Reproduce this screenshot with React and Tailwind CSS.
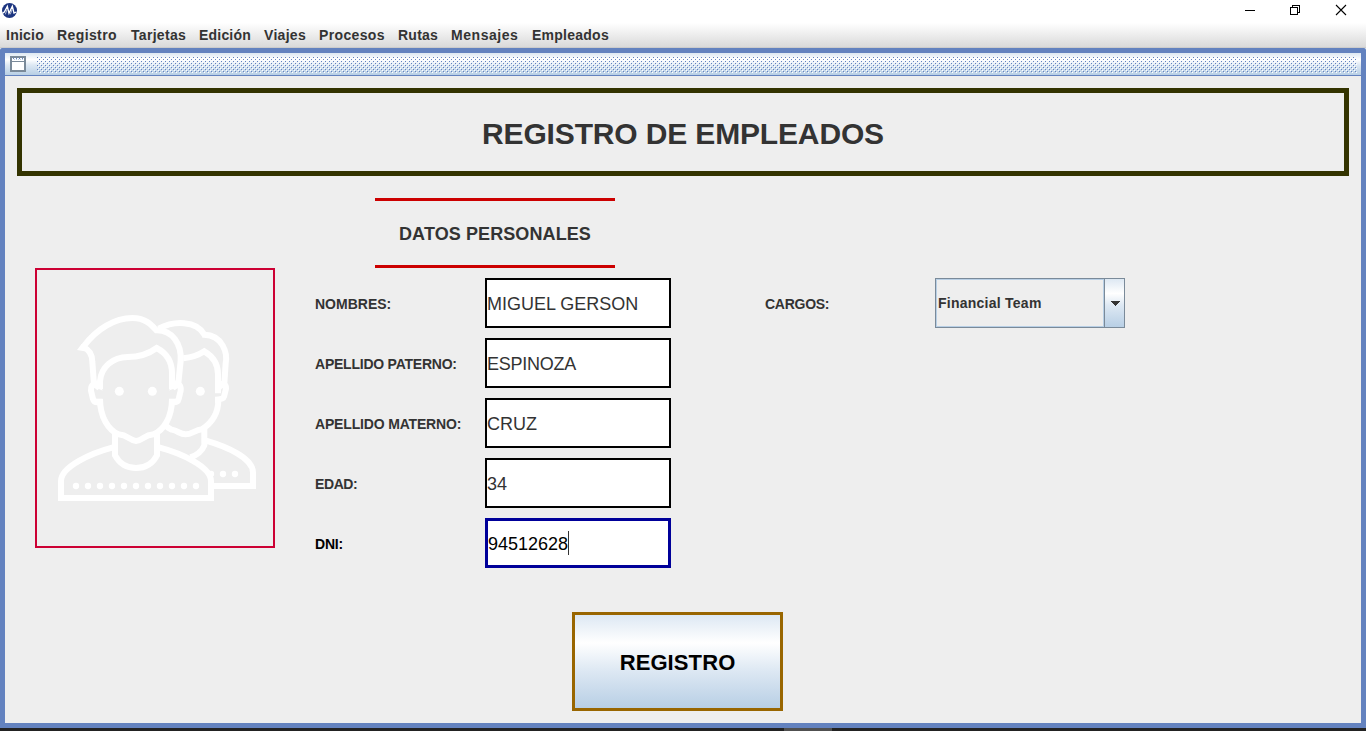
const menus = [
  { label: 'Inicio', cls: 'w-[51px] tracking-[0.25px]' },
  { label: 'Registro', cls: 'w-[74px] tracking-[0.4px]' },
  { label: 'Tarjetas', cls: 'w-[68px] tracking-[0.3px]' },
  { label: 'Edición', cls: 'w-[65px] tracking-[0.2px]' },
  { label: 'Viajes', cls: 'w-[55px] tracking-[0.3px]' },
  { label: 'Procesos', cls: 'w-[79px] tracking-[0.35px]' },
  { label: 'Rutas', cls: 'w-[53px] tracking-[0.25px]' },
  { label: 'Mensajes', cls: 'w-[81px] tracking-[0.55px]' },
  { label: 'Empleados', cls: 'w-[90px] tracking-[0.25px]' },
];

const fields = [
  { label: 'NOMBRES:', value: 'MIGUEL GERSON', labelCls: 'tracking-normal', valueCls: 'tracking-normal' },
  { label: 'APELLIDO PATERNO:', value: 'ESPINOZA', labelCls: 'tracking-[-0.23px]', valueCls: 'tracking-[-0.25px]' },
  { label: 'APELLIDO MATERNO:', value: 'CRUZ', labelCls: 'tracking-[-0.17px]', valueCls: 'tracking-normal' },
  { label: 'EDAD:', value: '34', labelCls: 'tracking-[-0.4px]', valueCls: 'tracking-normal' },
  { label: 'DNI:', value: '94512628', labelCls: 'tracking-[-0.2px]', valueCls: 'tracking-normal', focused: true },
];

function Logo() {
  return (
    <svg className="mt-[3px] ml-[2px] h-[15px] w-[15px]" viewBox="0 0 45 45">
      <circle cx="22.5" cy="22.5" r="22.5" fill="#1c3580" />
      <path d="M1 31L7 27L16 10L21 31L31 10L36 30L43 27" fill="none" stroke="#fff" strokeWidth="4" />
      <path d="M10 34L15 20M25 34L30 20" fill="none" stroke="#fff" strokeWidth="2" />
    </svg>
  );
}

function WindowControls() {
  return (
    <svg className="h-5 w-[126px]" viewBox="0 0 126 20" fill="none" stroke="#000" shapeRendering="crispEdges">
      <path d="M5 10.5H15" />
      <path d="M50.5 7.5H57.5V14.5H50.5ZM52.5 7.5V5.5H59.5V12.5H57.5" />
      <path d="M96 5L106 15M106 5L96 15" shapeRendering="auto" strokeWidth="1.1" />
    </svg>
  );
}

function FrameBar() {
  return (
    <div className="flex h-[23px] border-b border-[#6382bf] bg-[linear-gradient(to_bottom,#dde8f3_0%,#ffffff_30%,#dde8f3_55%,#b8cfe5_100%)]">
      <svg className="mt-[3px] ml-[5px] h-4 w-4" viewBox="0 0 16 16" shapeRendering="crispEdges">
        <rect x="1" y="1" width="14" height="14" fill="#fff" stroke="#7a8a99" strokeWidth="2" />
        <rect x="2" y="5" width="12" height="1" fill="#7a8a99" />
        <path d="M3 2.5H13" stroke="#6382bf" strokeDasharray="1 2" />
        <path d="M4 3.5H13" stroke="#b8cfe5" strokeDasharray="1 1" />
      </svg>
      <svg className="mt-1 ml-[11px] h-4 w-[1320px]" shapeRendering="crispEdges">
        <defs>
          <pattern id="bumps" width="4" height="4" patternUnits="userSpaceOnUse">
            <path d="M0 0h1v1h-1zM2 2h1v1h-1z" fill="#6382bf" />
            <path d="M1 1h1v1h-1zM3 3h1v1h-1z" fill="#fff" />
          </pattern>
        </defs>
        <rect width="1320" height="16" fill="url(#bumps)" />
      </svg>
    </div>
  );
}

function People() {
  return (
    <svg className="h-[210px] w-[250px] shrink-0" viewBox="0 0 750 630" fill="none" stroke="#fff" strokeWidth="18">
      <path d="M386 86C430 62 500 60 523 104C578 105 593 160 587 190L583 250" />
      <path d="M460 175Q495 172 523 154Q564 178 564 223V280" />
      <path d="M572 258Q589 247 588 266L582 290Q580 299 555 299M565 300C565 350 536 375 516 388C494 390 484 404 466 403C449 402 445 393 425 389Q413 384 407 376" />
      <path d="M523 386V436Q512 462 481 472M528 422C590 440 669 474 669 518V558H545" />
      <path d="M160 140C200 86 255 54 307 54C345 54 363 73 379 91C427 90 455 132 452 182L445 250" />
      <path d="M160 142C177 149 187 164 187 186L192 254" />
      <path d="M141 150L155 131L167 143L164 154Z" fill="#fff" stroke="none" />
      <path d="M210 268V244C213 201 249 171 293 171C333 171 361 158 380 144Q426 168 426 220V268" />
      <path d="M208 264Q182 241 183 272L189 297Q192 309 210 306M428 264Q454 241 452 272L446 297Q444 309 426 306" />
      <path d="M196 297H218M417 297H440" strokeWidth="2" />
      <path d="M210 297C210 351 235 390 265 403C295 405 299 422 318 423C337 422 342 405 371 403C402 390 426 351 426 297" />
      <path d="M255 395V466Q276 504 318 504Q361 504 381 466V395" />
      <path d="M249 442C185 459 93 499 93 543V594H543V543C543 499 451 459 387 442" />
      <path d="M201 240L218 272L184 254ZM435 240L417 272L452 254Z" fill="#fff" stroke="none" />
      <path d="M556 240L590 246L571 272L556 270Z" fill="#fff" stroke="none" />
      <g fill="#fff" stroke="none">
        <circle cx="268" cy="274" r="13.5" />
        <circle cx="367" cy="274" r="13.5" />
        <circle cx="511" cy="274" r="13.5" />
        {[138, 174, 210, 246, 282, 318, 354, 390, 426, 462, 498].map((x) => (
          <circle key={x} cx={x} cy="558" r="9.5" />
        ))}
        {[543, 579, 615].map((x) => (
          <circle key={x} cx={x} cy="522" r="9.5" />
        ))}
      </g>
    </svg>
  );
}

function Field({ label, value, labelCls, valueCls, focused }) {
  return (
    <div className="flex h-[50px] items-center">
      <label className={`w-[170px] pt-px text-sm font-bold whitespace-nowrap ${labelCls} ${focused ? 'text-black' : 'text-[#333333]'}`}>{label}</label>
      <div
        className={`flex h-[50px] w-[186px] items-center bg-white text-[18px] whitespace-nowrap ${
          focused ? 'border-[3px] border-[#000099] text-black' : 'border-2 border-black text-[#333333]'
        }`}
      >
        <span className={`pt-0.5 ${valueCls}`}>{value}</span>
        {focused && <span className="h-6 w-px bg-[#333333]" />}
      </div>
    </div>
  );
}

export default function App() {
  return (
    <div className="flex h-[731px] w-[1366px] flex-col overflow-hidden bg-white font-['Liberation_Sans',Arial,sans-serif] text-[#333333]">
      <header className="flex h-[23px] justify-between">
        <Logo />
        <WindowControls />
      </header>
      <nav className="flex h-[25px] items-center border-b border-[#cccccc] bg-linear-to-b from-white to-[#dadada] pl-1.5 text-sm font-bold">
        {menus.map((m) => (
          <span key={m.label} className={`whitespace-nowrap ${m.cls}`}>{m.label}</span>
        ))}
      </nav>
      <main className="flex h-[680px] flex-col rounded-t-[2px] border-[5px] border-[#6382bf] bg-[#eeeeee]">
        <FrameBar />
        <h1 className="mx-3 mt-3 flex h-[88px] items-center justify-center border-[5px] border-[#333300] pt-0.5 text-[30px] font-bold tracking-[-0.15px]">
          REGISTRO DE EMPLEADOS
        </h1>
        <div className="flex h-[370px] pl-[30px]">
          <section className="mt-[92px] flex h-[280px] w-[240px] shrink-0 justify-center overflow-hidden border-2 border-[#cc0033] pt-[30px]">
            <People />
          </section>
          <section className="mt-[22px] ml-10 w-[356px] shrink-0">
            <h2 className="ml-[60px] flex h-[70px] w-[240px] items-center justify-center border-y-[3px] border-[#cc0000] pt-0.5 text-[18px] font-bold tracking-[0.1px]">
              DATOS PERSONALES
            </h2>
            <div className="mt-2.5 flex flex-col gap-2.5">
              {fields.map((f) => (
                <Field key={f.label} {...f} />
              ))}
            </div>
          </section>
          <section className="mt-[102px] ml-[94px] flex h-[50px] items-center">
            <label className="w-[170px] pt-px text-sm font-bold tracking-[-0.27px]">CARGOS:</label>
            <div className="flex h-[50px] w-[190px] border border-[#7a8a99]">
              <div className="flex flex-1 items-center border border-[#b8cfe5] pl-px text-sm font-bold tracking-[0.25px] whitespace-nowrap">
                Financial Team
              </div>
              <div className="flex w-5 items-center justify-center border-l border-[#7a8a99] bg-[linear-gradient(to_bottom,#dde8f3_0%,#ffffff_30%,#dde8f3_55%,#b8cfe5_100%)]">
                <svg className="mt-px h-[5px] w-2.5" viewBox="0 0 10 5" shapeRendering="crispEdges">
                  <path d="M0 0H10L5 5Z" fill="#333333" />
                </svg>
              </div>
            </div>
          </section>
        </div>
        <button className="mt-[66px] ml-[567px] flex h-[99px] w-[211px] shrink-0 items-center justify-center border-[3px] border-[#996600] bg-[linear-gradient(to_bottom,#dde8f3_0%,#ffffff_30%,#dde8f3_60%,#b8cfe5_100%)] pt-px text-[22px] font-bold tracking-[0.1px] text-black">
          REGISTRO
        </button>
      </main>
      <footer className="flex h-[3px] bg-[#222222] pl-[784px]">
        <div className="h-[3px] w-12 bg-[#505050]" />
      </footer>
    </div>
  );
}
